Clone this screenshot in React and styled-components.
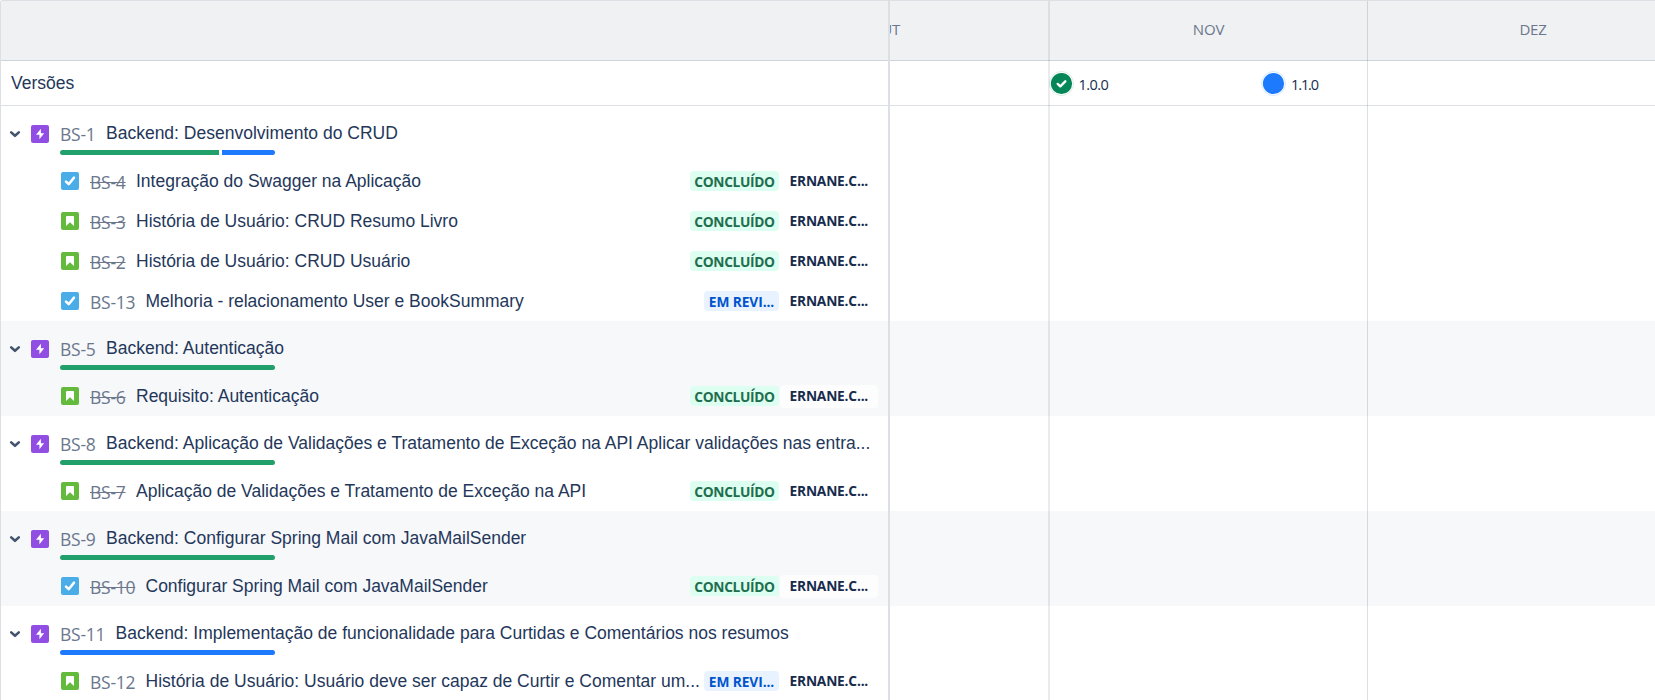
import React from "react";
import styled, { createGlobalStyle } from "styled-components";

const GlobalStyle = createGlobalStyle`
  * { box-sizing: border-box; }
  body { margin: 0; background: #fff; overflow: hidden; }
`;

const SANS = `"Liberation Sans", Arial, sans-serif`;
const UI = `"Open Sans", "Noto Sans", sans-serif`;

const Roadmap = styled.div`
  display: flex;
  width: 1655px;
  height: 700px;
  overflow: hidden;
  border-top: 1px solid #dcdfe4;
  border-left: 1px solid #dcdfe4;
  border-top-left-radius: 3px;
  color: #172b4d;
  font-family: ${SANS};
`;

const IssuePane = styled.section`
  flex: 0 0 889px;
  width: 889px;
  border-right: 2px solid #dcdfe4;
`;

const TimelinePane = styled.section`
  position: relative;
  flex: 1;
  min-width: 0;
  overflow: hidden;
`;

const HeaderBar = styled.div`
  height: 60px;
  background: #f0f1f3;
  border-bottom: 1px solid #cfd4db;
`;

const VersionsRow = styled.div`
  display: flex;
  align-items: center;
  height: 45px;
  border-bottom: 1px solid #dcdfe4;
`;

const VersionsTitle = styled.span`
  padding-left: 10px;
  color: #24375a;
  font-size: 17.5px;
  line-height: 20px;
`;

const Group = styled.div`
  background: ${(p) => (p.$shaded ? "#f7f8fa" : "#fff")};
`;

const TimelineGroup = styled(Group)`
  height: ${(p) => 55 + p.$count * 40}px;
`;

const EpicRow = styled.div`
  display: flex;
  height: 55px;
  padding-top: 19px;
  padding-left: 7px;
`;

const Chevron = styled.svg`
  flex: none;
  width: 14px;
  height: 18px;
  margin-right: 9px;
`;

const IconBox = styled.svg`
  flex: none;
  width: 18px;
  height: 18px;
`;

const EpicBody = styled.div`
  display: flex;
  flex-direction: column;
  min-width: 0;
  margin-left: 11px;
`;

const EpicLine = styled.div`
  display: flex;
  height: 25px;
`;

const IssueKey = styled.span`
  flex: none;
  width: ${(p) => p.$width}px;
  margin-top: -1px;
  color: #6b778d;
  font-family: ${UI};
  font-size: 17.5px;
  font-weight: 400;
  line-height: 21px;
  letter-spacing: -0.25px;
  white-space: nowrap;
  text-decoration: ${(p) => (p.$done ? "line-through" : "none")};
`;

const IssueTitle = styled.span`
  color: #24375a;
  font-size: 17.5px;
  line-height: 20px;
  white-space: nowrap;
  margin-top: -2px;
`;

const ChildTitle = styled(IssueTitle)`
  margin-top: -1px;
`;

const Progress = styled.div`
  display: flex;
  gap: 3px;
  width: 215px;
  height: 5px;
  border-radius: 3px;
  overflow: hidden;
`;

const Segment = styled.div`
  flex: ${(p) => p.$share};
  background: ${(p) => (p.$tone === "done" ? "#22a06b" : "#1d7afc")};
`;

const ChildRow = styled.div`
  display: flex;
  align-items: flex-start;
  height: 40px;
  padding: 11px 10px 0 60px;
`;

const ChildKey = styled(IssueKey)`
  margin-top: 0;
  margin-left: 11px;
`;

const Meta = styled.div`
  display: flex;
  align-items: flex-start;
  margin-left: auto;
  gap: 1px;
`;

const Status = styled.span`
  display: flex;
  justify-content: center;
  width: ${(p) => (p.$tone === "done" ? 89 : 75)}px;
  height: 20px;
  margin-top: -1px;
  border-radius: 4px;
  background: ${(p) => (p.$tone === "done" ? "#dcfff1" : "#e9f2ff")};
  color: ${(p) => (p.$tone === "done" ? "#216e4e" : "#0055cc")};
  font-family: ${UI};
  font-size: 13.75px;
  font-weight: 700;
  line-height: 21px;
  letter-spacing: ${(p) => (p.$tone === "done" ? "-0.35px" : "-0.1px")};
  white-space: nowrap;
`;

const Assignee = styled.span`
  width: 98px;
  height: 23px;
  margin-top: -2px;
  padding-left: 9.5px;
  border-radius: 4px;
  background: rgba(255, 255, 255, 0.7);
  font-family: ${UI};
  font-size: 13.75px;
  font-weight: 700;
  line-height: 22px;
  letter-spacing: -0.2px;
  white-space: nowrap;
`;

const Months = styled.div`
  position: absolute;
  inset: 0;
  display: flex;
  margin-left: -171px;
  pointer-events: none;
`;

const Month = styled.div`
  flex: none;
  width: ${(p) => p.$width}px;
  border-left: ${(p) => p.$line || 1}px solid rgba(9, 30, 66, ${(p) => (p.$line === 2 ? 0.09 : 0.14)});
  padding-top: 17px;
  padding-left: ${(p) => p.$shift || 0}px;
  color: #6b778d;
  font-family: ${UI};
  font-size: 15px;
  font-weight: 400;
  line-height: 22px;
  letter-spacing: -0.2px;
  text-align: center;
`;

const Release = styled.div`
  display: flex;
  align-items: center;
  height: 44px;
  margin-left: ${(p) => p.$offset}px;
`;

const ReleaseDot = styled.svg`
  width: 25px;
  height: 25px;
  margin-right: 5px;
`;

const ReleaseName = styled.span`
  width: 40px;
  padding-top: 3px;
  font-family: ${UI};
  font-size: 14.5px;
  line-height: 20px;
  letter-spacing: ${(p) => p.$spacing}px;
`;

function TypeIcon({ type }) {
  if (type === "epic") {
    return (
      <IconBox viewBox="0 0 18 18">
        <rect width="18" height="18" rx="2" fill="#904ee2" />
        <path d="M9.9 3.7 5 9.7h3.4v4.6l4.8-6H9.9z" fill="#fff" />
      </IconBox>
    );
  }
  if (type === "task") {
    return (
      <IconBox viewBox="0 0 18 18">
        <rect width="18" height="18" rx="2" fill="#4bade8" />
        <path d="m5 9.6 2.7 2.6L13 5.6" fill="none" stroke="#fff" strokeWidth="2.5" strokeLinecap="round" strokeLinejoin="round" />
      </IconBox>
    );
  }
  return (
    <IconBox viewBox="0 0 18 18">
      <rect width="18" height="18" rx="2" fill="#63ba3c" />
      <path d="M5 5a1 1 0 0 1 1-1h6a1 1 0 0 1 1 1v9l-4-3.8L5 14z" fill="#fff" />
    </IconBox>
  );
}

const ERNANE = "ERNANE.C...";
const STATUS = { done: "CONCLUÍDO", review: "EM REVI..." };

const groups = [
  {
    key: "BS-1",
    title: "Backend: Desenvolvimento do CRUD",
    progress: [["done", 159], ["review", 53]],
    children: [
      { key: "BS-4", type: "task", title: "Integração do Swagger na Aplicação", status: "done" },
      { key: "BS-3", type: "story", title: "História de Usuário: CRUD Resumo Livro", status: "done" },
      { key: "BS-2", type: "story", title: "História de Usuário: CRUD Usuário", status: "done" },
      { key: "BS-13", type: "task", title: "Melhoria - relacionamento User e BookSummary", status: "review" },
    ],
  },
  {
    key: "BS-5",
    title: "Backend: Autenticação",
    progress: [["done", 1]],
    children: [{ key: "BS-6", type: "story", title: "Requisito: Autenticação", status: "done" }],
  },
  {
    key: "BS-8",
    title: "Backend: Aplicação de Validações e Tratamento de Exceção na API Aplicar validações nas entra...",
    progress: [["done", 1]],
    children: [
      { key: "BS-7", type: "story", title: "Aplicação de Validações e Tratamento de Exceção na API", status: "done" },
    ],
  },
  {
    key: "BS-9",
    title: "Backend: Configurar Spring Mail com JavaMailSender",
    progress: [["done", 1]],
    children: [
      { key: "BS-10", type: "task", title: "Configurar Spring Mail com JavaMailSender", status: "done" },
    ],
  },
  {
    key: "BS-11",
    title: "Backend: Implementação de funcionalidade para Curtidas e Comentários nos resumos",
    progress: [["review", 1]],
    children: [
      { key: "BS-12", type: "story", title: "História de Usuário: Usuário deve ser capaz de Curtir e Comentar um...", status: "review" },
    ],
  },
];

const keyWidth = (key) => (key.length > 4 ? 55.5 : 46);

function Epic({ group }) {
  return (
    <EpicRow>
      <Chevron viewBox="0 0 14 18">
        <path d="m3.2 7.4 3.8 3.4 3.8-3.4" fill="none" stroke="#44546f" strokeWidth="2.6" strokeLinecap="round" strokeLinejoin="round" />
      </Chevron>
      <TypeIcon type="epic" />
      <EpicBody>
        <EpicLine>
          <IssueKey $width={keyWidth(group.key)}>{group.key}</IssueKey>
          <IssueTitle>{group.title}</IssueTitle>
        </EpicLine>
        <Progress>
          {group.progress.map(([tone, share]) => (
            <Segment key={tone} $tone={tone} $share={share} />
          ))}
        </Progress>
      </EpicBody>
    </EpicRow>
  );
}

function Child({ issue }) {
  return (
    <ChildRow>
      <TypeIcon type={issue.type} />
      <ChildKey $width={keyWidth(issue.key)} $done={issue.status === "done"}>{issue.key}</ChildKey>
      <ChildTitle>{issue.title}</ChildTitle>
      <Meta>
        <Status $tone={issue.status}>{STATUS[issue.status]}</Status>
        <Assignee>{ERNANE}</Assignee>
      </Meta>
    </ChildRow>
  );
}

export default function App() {
  return (
    <>
      <GlobalStyle />
      <Roadmap>
        <IssuePane>
          <HeaderBar />
          <VersionsRow>
            <VersionsTitle>Versões</VersionsTitle>
          </VersionsRow>
          {groups.map((group, i) => (
            <Group key={group.key} $shaded={i % 2 === 1}>
              <Epic group={group} />
              {group.children.map((issue) => (
                <Child key={issue.key} issue={issue} />
              ))}
            </Group>
          ))}
        </IssuePane>
        <TimelinePane>
          <HeaderBar />
          <VersionsRow>
            <Release $offset={158.5}>
              <ReleaseDot viewBox="0 0 25 25">
                <circle cx="12.5" cy="12.5" r="12" fill="#fff" stroke="#bfe3d3" strokeWidth="0.6" />
                <circle cx="12.5" cy="12.5" r="10.6" fill="#038759" />
                <path d="m8.7 12.9 2.6 2.4 5-5" fill="none" stroke="#fff" strokeWidth="2.4" strokeLinecap="round" strokeLinejoin="round" />
              </ReleaseDot>
              <ReleaseName $spacing={-0.55}>1.0.0</ReleaseName>
            </Release>
            <Release $offset={142.5}>
              <ReleaseDot viewBox="0 0 25 25">
                <circle cx="12.5" cy="12.5" r="12" fill="#fff" stroke="#bcd8ff" strokeWidth="0.6" />
                <circle cx="12.5" cy="12.5" r="10.6" fill="#1d7afc" />
              </ReleaseDot>
              <ReleaseName $spacing={-1.1}>1.1.0</ReleaseName>
            </Release>
          </VersionsRow>
          {groups.map((group, i) => (
            <TimelineGroup key={group.key} $shaded={i % 2 === 1} $count={group.children.length} />
          ))}
          <Months>
            <Month $width={329} $shift={2}>OUT</Month>
            <Month $width={319} $line={2}>NOV</Month>
            <Month $width={330} $shift={1}>DEZ</Month>
          </Months>
        </TimelinePane>
      </Roadmap>
    </>
  );
}
